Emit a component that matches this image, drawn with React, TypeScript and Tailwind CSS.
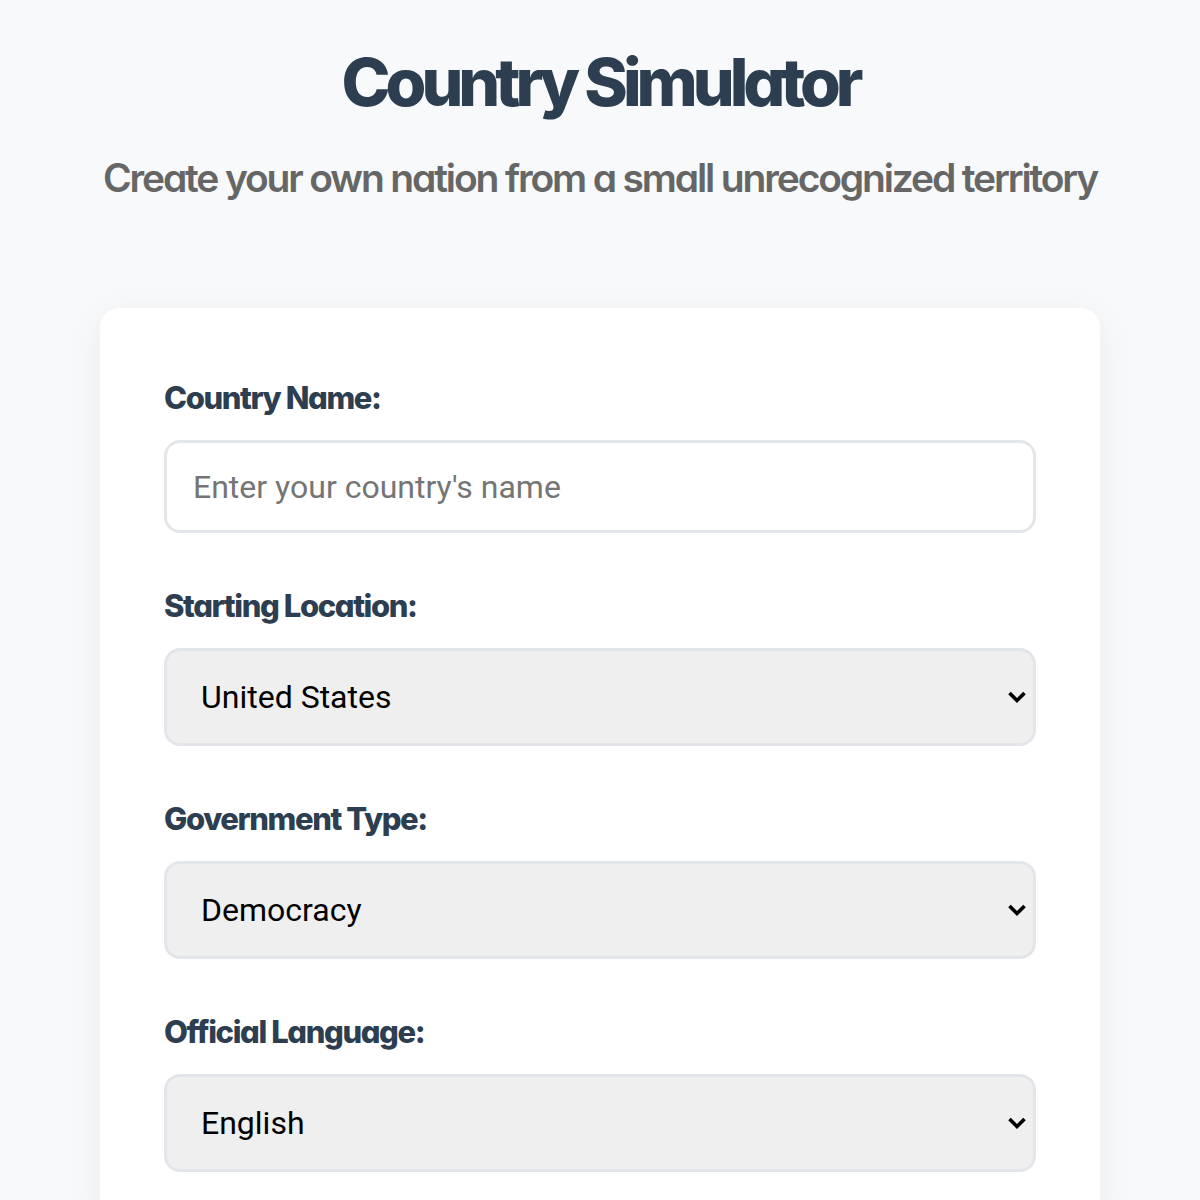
import { useState } from "react";

const fields = [
  { label: "Starting Location:", value: "United States", options: ["United States", "Canada", "United Kingdom", "Australia"] },
  { label: "Government Type:", value: "Democracy", options: ["Democracy", "Monarchy", "Republic", "Dictatorship"] },
  { label: "Official Language:", value: "English", options: ["English", "Spanish", "French", "German"] },
];

const Chevron = () => (
  <svg
    className="pointer-events-none absolute right-[9px] top-1/2 -translate-y-1/2"
    width="20"
    height="20"
    viewBox="0 0 20 20"
    fill="none"
  >
    <path d="M2.5 6 L10 13.5 L17.5 6" stroke="#000" strokeWidth="3.6" />
  </svg>
);

const App = () => {
  const [name, setName] = useState<string>("");
  const [values, setValues] = useState<string[]>(fields.map((f) => f.value));

  return (
    <div className="min-h-screen bg-[#f8f9fa] flex flex-col items-center font-['Inter',sans-serif] [font-feature-settings:'cv11']">
      <h1 className="mt-[44px] text-[66px] leading-[76px] font-extrabold tracking-[-0.076em] text-[#2c3e50]">
        Country Simulator
      </h1>
      <p className="mt-[34px] text-[39px] leading-[48px] font-semibold tracking-[-0.055em] text-[#666666]">
        Create your own nation from a small unrecognized territory
      </p>

      <div className="mt-[106px] w-[1000px] rounded-[20px] bg-white px-[64px] pt-[70px] pb-[60px] shadow-[0_8px_40px_rgba(0,0,0,0.06)]">
        <label className="block text-[31px] leading-[40px] font-extrabold tracking-[-0.045em] text-[#2c3e50]">
          Country Name:
        </label>
        <input
          className="mt-[22px] block w-full h-[93px] rounded-[16px] border-[3px] border-[#e2e6ea] bg-white px-[26px] font-['Roboto',sans-serif] text-[32px] text-black placeholder:text-[#757575] outline-none"
          placeholder="Enter your country's name"
          type="text"
          value={name}
          onChange={(event: React.ChangeEvent<HTMLInputElement>) => setName(event.currentTarget.value)}
        />

        {fields.map((f, i) => (
          <div key={f.label} className="mt-[53px]">
            <label className="block text-[31px] leading-[40px] font-extrabold tracking-[-0.045em] text-[#2c3e50]">
              {f.label}
            </label>
            <div className="relative mt-[22px]">
              <select
                className="block w-full h-[98px] appearance-none rounded-[16px] border-[3px] border-[#e2e5ea] bg-[#efefef] px-[34px] font-['Roboto',sans-serif] text-[32px] text-black outline-none"
                value={values[i]}
                onChange={(event: React.ChangeEvent<HTMLSelectElement>) => {
                  const next = [...values];
                  next[i] = event.currentTarget.value;
                  setValues(next);
                }}
              >
                {f.options.map((o) => (
                  <option key={o}>{o}</option>
                ))}
              </select>
              <Chevron />
            </div>
          </div>
        ))}
      </div>
    </div>
  );
};

export default App;
